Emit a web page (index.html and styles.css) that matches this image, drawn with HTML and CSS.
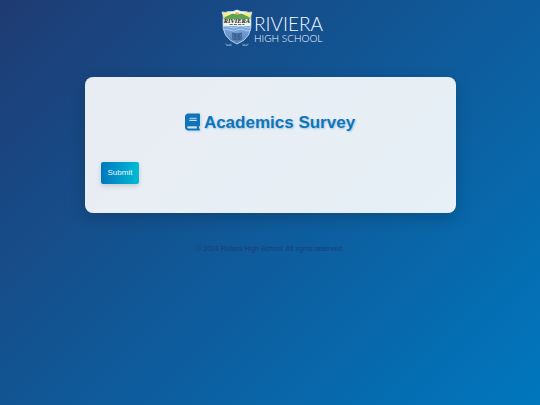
FILE: index.html
```html
<!DOCTYPE html>
<html lang="en">
<head>
<meta charset="utf-8">
<meta name="viewport" content="width=device-width, initial-scale=1">
<title>Academics Survey</title>
<link rel="stylesheet" href="styles.css">
</head>
<body>
<header class="header">
  <svg class="crest" viewBox="1 0 30 38" preserveAspectRatio="none" aria-hidden="true">
    <defs>
      <linearGradient id="sky" x1="0" y1="0" x2="0" y2="1">
        <stop offset="0" stop-color="#f4f7d0"/><stop offset="1" stop-color="#e9e63c"/>
      </linearGradient>
      <linearGradient id="sea" x1="0" y1="0" x2="0" y2="1">
        <stop offset="0" stop-color="#7fabe0"/><stop offset="1" stop-color="#4f7cb8"/>
      </linearGradient>
      <clipPath id="shield"><path d="M2 3Q5 4 8 2.500Q12 3.500 16 1Q20 3.500 24 2.500Q27 4 30 3Q28.500 7 29 11Q31 29 16 35Q1 29 3 11Q3.500 7 2 3Z"/></clipPath>
    </defs>
    <g clip-path="url(#shield)">
      <path fill="url(#sky)" d="M0 0h32v12H0z"/>
      <path fill="#fff" d="M8 0h16l-2 5H10z"/>
      <circle cx="16" cy="5" r="2" fill="#f0b447"/>
      <path fill="#5fa453" d="M2 11Q5 7 9 6Q12 3 16 6Q20 3 23 6Q27 7 30 11Z"/>
      <path fill="#eef3e6" d="M0 10h32v7H0z"/>
      <path fill="url(#sea)" d="M0 17h32v20H0z"/>
      <path fill="none" stroke="#b9d3f1" stroke-width=".8" d="M2 18q3.500-2 7 0t7 0t7 0t7 0M2 21q3.500-2 7 0t7 0t7 0t7 0"/>
      <path fill="#3d628f" d="M11.500 23.500l4.500 1l4.500-1v7l-4.500 1l-4.500-1z"/>
      <path fill="none" stroke="#6d8fba" stroke-width=".5" d="M16 25v6M13 25v5M19 25v5"/>
    </g>
    <path fill="none" stroke="#c9dcf0" stroke-width=".8" d="M2 3Q5 4 8 2.500Q12 3.500 16 1Q20 3.500 24 2.500Q27 4 30 3Q28.500 7 29 11Q31 29 16 35Q1 29 3 11Q3.500 7 2 3Z"/>
    <text class="crest-name" x="16" y="14" text-anchor="middle">RIVIERA</text>
    <path stroke="#5d6f72" stroke-width="1" stroke-dasharray="3 1" d="M9 15.500h14"/>
    <path fill="none" stroke="#8fb2d8" stroke-width=".6" d="M5 35q3 2 6 0M6 36.500h5M21 35q3 2 6 0M21 36.500h5"/>
  </svg>
  <div class="wordmark">
    <span class="wordmark-name">RIVIERA</span>
    <span class="wordmark-sub">HIGH SCHOOL</span>
  </div>
</header>
<main class="card">
  <h1 class="title">
    <svg class="book" viewBox="0 0 448 512" aria-hidden="true"><path d="M96 0C43 0 0 43 0 96V416c0 53 43 96 96 96H384h32c17.700 0 32-14.300 32-32s-14.300-32-32-32V384c17.700 0 32-14.300 32-32V32c0-17.700-14.300-32-32-32H384 96zm0 384H352v64H96c-17.700 0-32-14.300-32-32s14.300-32 32-32zm32-240c0-8.800 7.200-16 16-16H336c8.800 0 16 7.200 16 16s-7.200 16-16 16H144c-8.800 0-16-7.200-16-16zm16 48H336c8.800 0 16 7.200 16 16s-7.200 16-16 16H144c-8.800 0-16-7.200-16-16s7.200-16 16-16z"/></svg>
    <span>Academics Survey</span>
  </h1>
  <form>
    <button class="submit" type="submit">Submit</button>
  </form>
</main>
<footer class="footer">© 2024 Riviera High School. All rights reserved.</footer>
</body>
</html>
```
FILE: styles.css
```css
* {
  box-sizing: border-box;
}

body {
  margin: 0;
  min-height: 100vh;
  background: linear-gradient(135deg, #1f3b73, #0077be);
  font-family: "Liberation Sans", Arial, sans-serif;
}

.header {
  display: flex;
  justify-content: center;
  gap: 1px;
  padding: 9px 0 30px 4px;
}

.crest {
  width: 32px;
  height: 38px;
}

.crest-name {
  font: italic bold 6px "Liberation Serif", serif;
  fill: #18221c;
}

.wordmark {
  display: flex;
  flex-direction: column;
  padding-top: 5px;
  color: #f4f9ff;
  font-family: Lato, sans-serif;
  font-weight: 300;
  white-space: nowrap;
}

.wordmark-name {
  font-size: 19px;
  line-height: 20px;
}

.wordmark-sub {
  font-size: 10px;
  line-height: 9px;
}

.card {
  width: 371px;
  max-width: 92%;
  margin: 0 auto;
  padding: 36px 16px 29px;
  border-radius: 8px;
  background: rgba(255, 255, 255, 0.9);
  box-shadow: 0 4px 16px rgba(0, 0, 0, 0.2);
}

.title {
  display: flex;
  align-items: flex-start;
  justify-content: center;
  gap: 4px;
  margin: 0 0 29px;
  color: #0f75b8;
  font-size: 17px;
  line-height: 20px;
  text-shadow: 1px 1px 2px rgba(0, 119, 190, 0.3);
}

.book {
  width: 15px;
  height: 18px;
  fill: currentColor;
  filter: drop-shadow(1px 1px 1px rgba(0, 119, 190, 0.2));
}

.submit {
  display: block;
  padding: 6px 7px;
  border: 0;
  border-radius: 2px;
  background: linear-gradient(90deg, #0077be, #00bcd4);
  box-shadow: 0 2px 5px rgba(0, 0, 0, 0.15);
  color: #e8f7ff;
  font: 8px/10px "Liberation Sans", Arial, sans-serif;
}

.footer {
  padding: 32px 0;
  color: #1f3b73;
  font-size: 7px;
  line-height: 8px;
  text-align: center;
}
```
